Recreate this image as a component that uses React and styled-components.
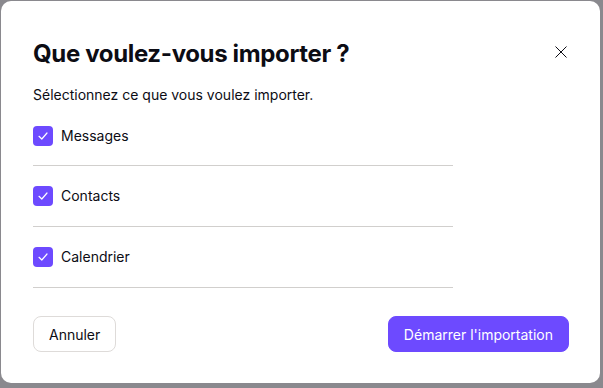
import React, { useState } from 'react';
import styled, { createGlobalStyle } from 'styled-components';

const GlobalStyle = createGlobalStyle`
	html, body {
		margin: 0;
		padding: 0;
		background: #8a898e;
	}
	body {
		font-family: Inter, "Noto Sans", sans-serif;
		color: #0c0c14;
	}
`;

const Backdrop = styled.div`
	width: 603px;
	height: 388px;
	padding: 1px 3px 5px 1px;
	box-sizing: border-box;
	display: flex;
`;

const Modal = styled.div`
	flex: 1;
	background: #fff;
	border-radius: 10px;
	padding: 35px 31px 31px 32px;
	display: flex;
	flex-direction: column;
	box-sizing: border-box;
`;

const Header = styled.div`
	display: flex;
	align-items: flex-start;
	justify-content: space-between;
`;

const Title = styled.h1`
	margin: 0;
	font-size: 24px;
	line-height: 36px;
	font-weight: 700;
	letter-spacing: -0.35px;
`;

const CloseButton = styled.button`
	border: 0;
	background: none;
	padding: 0;
	width: 24px;
	height: 24px;
	margin: 4px -4px 0 0;
	display: flex;
	align-items: center;
	justify-content: center;
	color: #0c0c14;
	cursor: pointer;
`;

const Subtitle = styled.p`
	margin: 13px 0 0;
	font-size: 14px;
	line-height: 20px;
`;

const List = styled.div`
	width: 420px;
	margin-top: 12px;
	display: flex;
	flex-direction: column;
`;

const Row = styled.label`
	display: flex;
	align-items: center;
	gap: 8px;
	padding: ${(p) => (p.$first ? '9px 0 19px' : '20px 0')};
	border-bottom: 1px solid #d1cfcd;
	font-size: 14px;
	line-height: 20px;
	cursor: pointer;
`;

const Box = styled.span`
	width: 20px;
	height: 20px;
	border-radius: 4px;
	background: ${(p) => (p.$checked ? '#6d4aff' : '#fff')};
	border: ${(p) => (p.$checked ? 'none' : '1px solid #adaba8')};
	display: flex;
	align-items: center;
	justify-content: center;
	flex-shrink: 0;
`;

const Footer = styled.div`
	margin-top: auto;
	display: flex;
	justify-content: space-between;
`;

const Button = styled.button`
	height: 36px;
	padding: 0 15px;
	border-radius: 8px;
	font-family: inherit;
	font-size: 14px;
	cursor: pointer;
	border: 1px solid ${(p) => (p.$primary ? '#6d4aff' : '#dedbd9')};
	background: ${(p) => (p.$primary ? '#6d4aff' : '#fff')};
	color: ${(p) => (p.$primary ? '#fff' : '#0c0c14')};
`;

const Check = () => (
	<svg width="12" height="12" viewBox="0 0 12 12" fill="none">
		<path d="M2 6.3 L4.8 9 L10 3" stroke="#fff" strokeWidth="1.2" strokeLinecap="round" strokeLinejoin="round" />
	</svg>
);

const items = ['Messages', 'Contacts', 'Calendrier'];

export default function App() {
	const [checked, setChecked] = useState({ Messages: true, Contacts: true, Calendrier: true });

	return (
		<>
			<GlobalStyle />
			<Backdrop>
				<Modal>
					<Header>
						<Title>Que voulez-vous importer ?</Title>
						<CloseButton aria-label="Fermer">
							<svg width="12" height="12" viewBox="0 0 12 12">
								<path d="M0.5 0.5 L11.5 11.5 M11.5 0.5 L0.5 11.5" stroke="currentColor" strokeWidth="1" />
							</svg>
						</CloseButton>
					</Header>
					<Subtitle>Sélectionnez ce que vous voulez importer.</Subtitle>
					<List>
						{items.map((el, i) => (
							<Row
								key={el}
								$first={i === 0}
								onClick={() => setChecked({ ...checked, [el]: !checked[el] })}
							>
								<Box $checked={checked[el]}>{checked[el] && <Check />}</Box>
								{el}
							</Row>
						))}
					</List>
					<Footer>
						<Button>Annuler</Button>
						<Button $primary>Démarrer l'importation</Button>
					</Footer>
				</Modal>
			</Backdrop>
		</>
	);
}
